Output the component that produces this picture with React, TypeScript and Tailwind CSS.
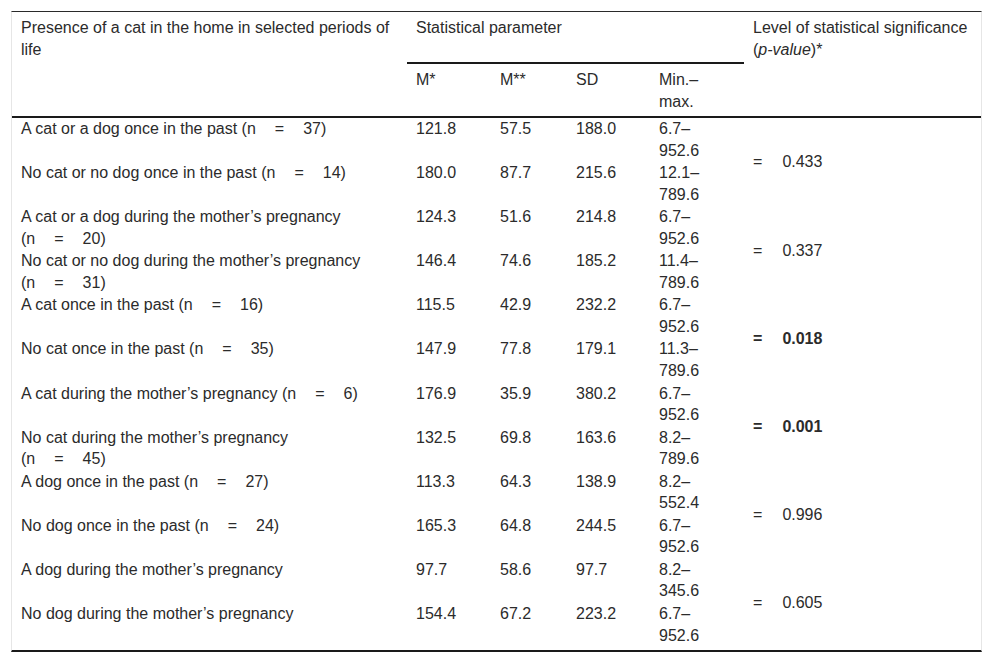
import React from "react";

type Row = { label: React.ReactNode; m1: string; m2: string; sd: string; lo: string; hi: string };

const N = ({ n }: { n: string }) => (
  <span className="whitespace-nowrap">
    (n<span className="ml-[19px] mr-[19px]">=</span>
    {n})
  </span>
);

const rows: Row[] = [
  { label: <>A cat or a dog once in the past <N n="37" /></>, m1: "121.8", m2: "57.5", sd: "188.0", lo: "6.7–", hi: "952.6" },
  { label: <>No cat or no dog once in the past <N n="14" /></>, m1: "180.0", m2: "87.7", sd: "215.6", lo: "12.1–", hi: "789.6" },
  { label: <>A cat or a dog during the mother’s pregnancy<br /><N n="20" /></>, m1: "124.3", m2: "51.6", sd: "214.8", lo: "6.7–", hi: "952.6" },
  { label: <>No cat or no dog during the mother’s pregnancy<br /><N n="31" /></>, m1: "146.4", m2: "74.6", sd: "185.2", lo: "11.4–", hi: "789.6" },
  { label: <>A cat once in the past <N n="16" /></>, m1: "115.5", m2: "42.9", sd: "232.2", lo: "6.7–", hi: "952.6" },
  { label: <>No cat once in the past <N n="35" /></>, m1: "147.9", m2: "77.8", sd: "179.1", lo: "11.3–", hi: "789.6" },
  { label: <>A cat during the mother’s pregnancy <N n="6" /></>, m1: "176.9", m2: "35.9", sd: "380.2", lo: "6.7–", hi: "952.6" },
  { label: <>No cat during the mother’s pregnancy<br /><N n="45" /></>, m1: "132.5", m2: "69.8", sd: "163.6", lo: "8.2–", hi: "789.6" },
  { label: <>A dog once in the past <N n="27" /></>, m1: "113.3", m2: "64.3", sd: "138.9", lo: "8.2–", hi: "552.4" },
  { label: <>No dog once in the past <N n="24" /></>, m1: "165.3", m2: "64.8", sd: "244.5", lo: "6.7–", hi: "952.6" },
  { label: <>A dog during the mother’s pregnancy</>, m1: "97.7", m2: "58.6", sd: "97.7", lo: "8.2–", hi: "345.6" },
  { label: <>No dog during the mother’s pregnancy</>, m1: "154.4", m2: "67.2", sd: "223.2", lo: "6.7–", hi: "952.6" },
];

const pvals: { v: string; bold: boolean }[] = [
  { v: "0.433", bold: false },
  { v: "0.337", bold: false },
  { v: "0.018", bold: true },
  { v: "0.001", bold: true },
  { v: "0.996", bold: false },
  { v: "0.605", bold: false },
];

const td = "align-top pl-[9px] pr-[4px] pt-0 pb-0";

export default function App() {
  return (
    <div className="min-h-[663px] bg-white pt-[11px] text-[#2b2b2b] text-[16px] leading-[21.5px] [font-family:'Liberation_Sans',Arial,sans-serif]">
      <div className="ml-[11px] w-[971px] pb-[3px] border-l border-r border-l-[#e6e6e6] border-r-[#e6e6e6] border-t border-t-[#2a2a2a] border-b-2 border-b-[#1a1a1a]">
        <table className="table-fixed border-separate border-spacing-0 w-[969px]">
          <colgroup>
            <col className="w-[395px]" />
            <col className="w-[84px]" />
            <col className="w-[76px]" />
            <col className="w-[83px]" />
            <col className="w-[94px]" />
            <col className="w-[237px]" />
          </colgroup>
          <thead>
            <tr className="h-[52px]">
              <th rowSpan={2} className="align-top text-left font-normal pl-[9px] pr-[4px] pt-[5px] border-b-2 border-b-[#1a1a1a]">
                Presence of a cat in the home in selected periods of
                <br />
                life
              </th>
              <th colSpan={4} className="align-top text-left font-normal pl-[9px] pt-[5px] border-b-2 border-b-[#1a1a1a]">
                Statistical parameter
              </th>
              <th rowSpan={2} className="align-top text-left font-normal pl-[9px] pr-[4px] pt-[5px] border-b-2 border-b-[#1a1a1a]">
                Level of statistical significance
                <br />
                (<i>p-value</i>)*
              </th>
            </tr>
            <tr className="h-[54px]">
              <th className="align-top text-left font-normal pl-[9px] pt-[5px] border-b-2 border-b-[#1a1a1a]">M*</th>
              <th className="align-top text-left font-normal pl-[9px] pt-[5px] border-b-2 border-b-[#1a1a1a]">M**</th>
              <th className="align-top text-left font-normal pl-[9px] pt-[5px] border-b-2 border-b-[#1a1a1a]">SD</th>
              <th className="align-top text-left font-normal pl-[9px] pt-[5px] border-b-2 border-b-[#1a1a1a]">
                Min.–
                <br />
                max.
              </th>
            </tr>
          </thead>
          <tbody>
            {rows.map((r, i) => (
              <tr key={i} className="h-[44.1px]">
                <td className={td}>{r.label}</td>
                <td className={td}>{r.m1}</td>
                <td className={td}>{r.m2}</td>
                <td className={td}>{r.sd}</td>
                <td className={td}>
                  {r.lo}
                  <br />
                  {r.hi}
                </td>
                {i % 2 === 0 && (
                  <td rowSpan={2} className={"align-middle pl-[9px] " + (pvals[i / 2].bold ? "font-bold" : "")}>
                    <span className="mr-[20px]">=</span>
                    {pvals[i / 2].v}
                  </td>
                )}
              </tr>
            ))}
          </tbody>
        </table>
      </div>
    </div>
  );
}
